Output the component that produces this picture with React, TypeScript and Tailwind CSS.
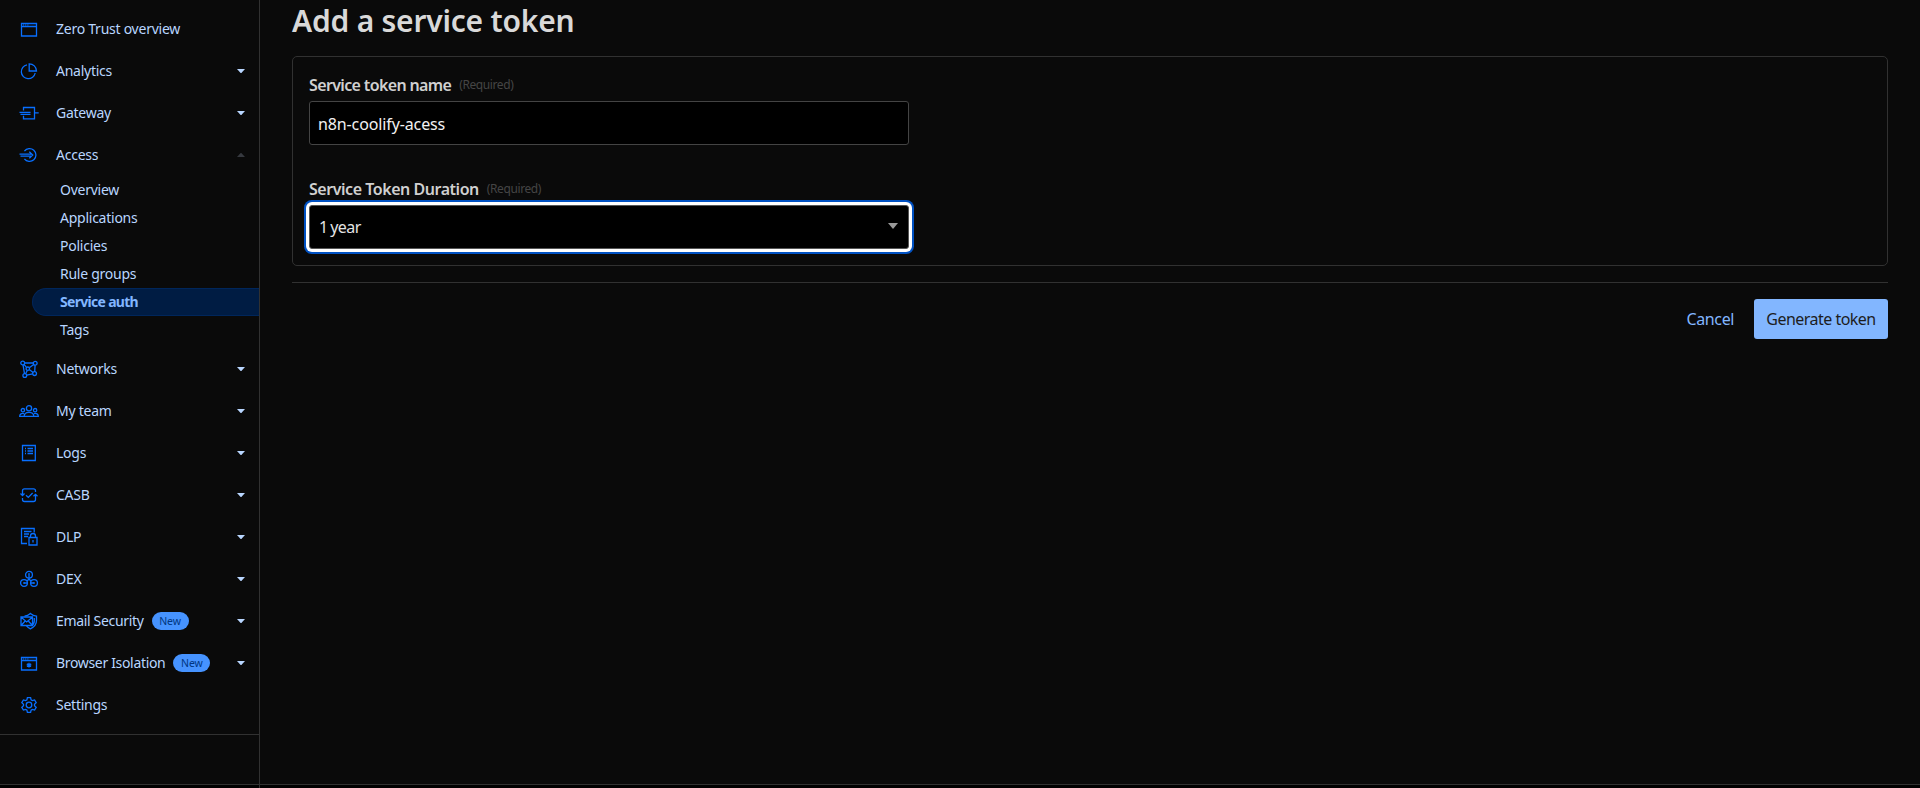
import type { ReactNode } from "react";
import clsx from "clsx";

type NavItem = {
  label: string;
  icon: ReactNode;
  badge?: string;
  caret?: boolean;
  open?: boolean;
  children?: string[];
};

const navItems: NavItem[] = [
  {
    label: "Zero Trust overview",
    icon: (
      <>
        <path d="M2.5 4.5h15v12.5h-15zM2.5 7.5h15" />
        <path d="M4.3 6h.8M6.4 6h.8M8.5 6h.8" />
      </>
    )
  },
  {
    label: "Analytics",
    caret: true,
    icon: (
      <>
        <path d="M8 3.8A7 7 0 1 0 16.2 12" />
        <path d="M10.2 2.8v7.2h7.3A7.3 7.3 0 0 0 10.2 2.8z" />
      </>
    )
  },
  {
    label: "Gateway",
    caret: true,
    icon: (
      <>
        <path d="M4.5 7.5v-3h11v11.3h-11v-3" />
        <path d="M.5 9.4h11M1.5 11.3h10M15.5 9.8h4.2" />
      </>
    )
  },
  {
    label: "Access",
    caret: true,
    open: true,
    icon: (
      <>
        <path d="M5.4 6.2a6.4 6.4 0 1 1 0 7.6" />
        <path d="M.5 9.2h12.5M1.5 11.1h11.8M10.3 6.8l3.4 3.3-3.4 3.2" />
      </>
    ),
    children: ["Overview", "Applications", "Policies", "Rule groups", "Service auth", "Tags"]
  },
  {
    label: "Networks",
    caret: true,
    icon: (
      <>
        <circle cx="3.7" cy="4" r="1.9" />
        <circle cx="16.2" cy="4.3" r="1.9" />
        <circle cx="5.8" cy="16.5" r="1.9" />
        <circle cx="15.6" cy="14.6" r="1.9" />
        <circle cx="8.8" cy="9.7" r="1.7" />
        <path d="M5.6 4h8.7M4 5.9l1.5 8.7M16.1 6.2l-.4 6.5M7.7 16.1l6-1.2M5 5.4l2.5 3M14.7 5.5l-4.4 3.2M8.3 11.4l-1.7 3.4M10.3 10.6l3.8 2.9" />
      </>
    )
  },
  {
    label: "My team",
    caret: true,
    icon: (
      <>
        <circle cx="10" cy="7.2" r="2.6" />
        <circle cx="3.9" cy="9.2" r="1.7" />
        <circle cx="16.1" cy="9.2" r="1.7" />
        <path d="M5.2 15.3c0-3 2-4 4.8-4s4.8 1 4.8 4zM5 12.7c-2.5-.7-4.3.3-4.3 2.6h4.5M15 12.7c2.5-.7 4.3.3 4.3 2.6h-4.5" />
      </>
    )
  },
  {
    label: "Logs",
    caret: true,
    icon: (
      <>
        <path d="M3.5 2.5h12.8v15H3.5z" />
        <path d="M6 5.5h1M8.5 5.5h5.5M6 8h1M8.5 8h5.5M6 10.5h1M8.5 10.5h5.5" />
      </>
    )
  },
  {
    label: "CASB",
    caret: true,
    icon: (
      <>
        <path d="M3.5 6.5v-.7c0-1.2.7-2 2-2h9c1.3 0 2 .8 2 2V7M16.5 10v4.5c0 1.2-.7 2-2 2h-9c-1.3 0-2-.8-2-2V13M3.5 6v4" />
        <path d="M1.5 8.5l2 2 2-2M14.5 11.3l2-2 2 2M7 10.2l2.3 2.2L13.6 8" />
      </>
    )
  },
  {
    label: "DLP",
    caret: true,
    icon: (
      <>
        <path d="M8 16.5H2.5v-15h12.7v4M5 4.5h7.5M5 7h5M5 9.5h4" />
        <path d="M10 10.5h8V18h-8zM11.5 10.5V9a2.5 2.5 0 0 1 5 0v1.5M14 13v2.5" />
      </>
    )
  },
  {
    label: "DEX",
    caret: true,
    icon: (
      <>
        <circle cx="10" cy="5.8" r="3.4" />
        <circle cx="5" cy="14" r="3.4" />
        <circle cx="15" cy="14" r="3.4" />
        <path d="M10 4.8v5.2l-1.9 2M10 10l1.9 2M8.2 14H5M11.8 14H15M5 13v2M15 13v2M9.2 4.8h1.6" />
      </>
    )
  },
  {
    label: "Email Security",
    badge: "New",
    caret: true,
    icon: (
      <>
        <path d="M5.5 5.2c2.2-.3 4.2-1.3 5.9-2.8 1.8 1.6 3.9 2.6 6.1 2.8v4.3c0 3.8-2.2 6.4-6.1 8.3-1.6-.8-2.9-1.8-3.9-3" />
        <path d="M2 6h11.5v8.5H2zM2.2 6.3l5.5 4.6 5.6-4.6M2.2 14.2l3.8-4M13.3 14.2l-3.8-4M15.3 7v3c0 2-1.2 4-3 5" />
      </>
    )
  },
  {
    label: "Browser Isolation",
    badge: "New",
    caret: true,
    icon: (
      <>
        <path d="M2.5 4.5h15v12.5h-15zM2.5 7.5h15" />
        <path d="M4.3 6h.8M6.4 6h.8M8.5 6h.8" />
        <path d="M10 9.8v4.6M7.8 10.9l4.4 2.5M12.2 10.9l-4.4 2.5" strokeWidth="1.4" />
      </>
    )
  },
  {
    label: "Settings",
    icon: (
      <>
        <circle cx="10" cy="10" r="2.8" />
        <path d="M8.4 2.6h3.2l.5 2.3 1.2.7 2.3-.7 1.6 2.7-1.7 1.6v1.6l1.7 1.6-1.6 2.7-2.3-.7-1.2.7-.5 2.3H8.4l-.5-2.3-1.2-.7-2.3.7-1.6-2.7 1.7-1.6V9.2L2.8 7.6l1.6-2.7 2.3.7 1.2-.7z" />
      </>
    )
  }
];

function NavRow({ item }: { item: NavItem }) {
  return (
    <a className="flex h-[42px] items-center pr-[14px] pl-[19px] text-sm tracking-[-0.25px] text-[#b9d6ff]">
      <svg viewBox="0 0 20 20" className="mr-[17px] size-5 shrink-0 fill-none stroke-[#086fff]" strokeWidth="1.3">
        {item.icon}
      </svg>
      <span className={clsx(item.badge && "tracking-[-0.33px]")}>{item.label}</span>
      {item.badge && (
        <span className="ml-2 flex h-[18px] w-[37px] items-center justify-center rounded-full bg-[#4693ff] text-[10.5px] tracking-[-0.1px] text-[#003681]">
          {item.badge}
        </span>
      )}
      {item.caret && (
        <svg
          viewBox="0 0 8 4"
          className={clsx("ml-auto h-1 w-2", item.open ? "rotate-180 fill-[#36393f]" : "fill-[#b9d6ff]")}
        >
          <path d="M0 0h8L4.6 3.7a.9.9 0 0 1-1.2 0z" />
        </svg>
      )}
    </a>
  );
}

function Sidebar() {
  return (
    <aside className="flex w-[260px] shrink-0 flex-col border-r border-[#313131]">
      <nav className="border-b border-[#313131] pt-2 pb-2">
        {navItems.map((item) => (
          <div key={item.label}>
            <NavRow item={item} />
            {item.children && (
              <ul className="mb-1 pl-8 text-sm">
                {item.children.map((child) => (
                  <li
                    key={child}
                    className={clsx(
                      "flex h-7 items-center rounded-l-full border border-r-0 pl-[27px]",
                      child === "Service auth"
                        ? "border-[#00265b] bg-[#001c43] font-bold tracking-[-0.7px] text-[#82b6ff]"
                        : "border-transparent tracking-[-0.25px] text-[#b9d6ff]"
                    )}
                  >
                    {child}
                  </li>
                ))}
              </ul>
            )}
          </div>
        ))}
      </nav>
    </aside>
  );
}

function FieldLabel({ text, className }: { text: string; className: string }) {
  return (
    <div className="flex items-center text-base leading-6 font-semibold text-[#d0d0d0]">
      <span className={className}>{text}</span>
      <span className="ml-2 text-xs font-normal tracking-[-0.4px] text-[#454545]">(Required)</span>
    </div>
  );
}

export default function App() {
  return (
    <div className="flex h-[788px] flex-col overflow-hidden bg-black font-['Noto_Sans',sans-serif]">
      <div className="flex h-[784px] bg-[#0a0a0a]">
        <Sidebar />
        <main className="flex-1 pr-8 pl-8">
          <h1 className="h-14 text-[30px] leading-[42px] font-semibold tracking-[-0.22px] text-[#d9d9d9]">
            Add a service token
          </h1>
          <section className="h-[210px] rounded-[5px] border border-[#313131] px-4 pt-4">
            <FieldLabel text="Service token name" className="tracking-[-0.64px]" />
            <div className="mt-1 flex h-11 w-[600px] items-center rounded-[3px] border border-[#444] bg-black px-2 pt-0.5 text-base tracking-[-0.12px] text-[#f2f2f2]">
              n8n-coolify-acess
            </div>
            <div className="mt-8">
              <FieldLabel text="Service Token Duration" className="tracking-[-0.46px]" />
            </div>
            <div className="mt-1 flex h-11 w-[600px] items-center justify-between rounded-[3px] border border-[#555] bg-black pr-[10px] pl-[9px] text-base tracking-[-0.6px] text-[#e4e4e4] shadow-[0_0_0_3px_#fff,0_0_0_5px_#0051c3]">
              <span className="[word-spacing:-0.8px]">1 year</span>
              <svg viewBox="0 0 10 6" className="mb-0.5 h-1.5 w-2.5 fill-[#999]">
                <path d="M0 0h10L5 6z" />
              </svg>
            </div>
          </section>
          <hr className="mt-4 border-[#313131]" />
          <div className="mt-4 flex items-center justify-end gap-5 text-base">
            <a className="tracking-[-0.4px] text-[#82b6ff]">Cancel</a>
            <button className="h-10 w-[134px] rounded-[3px] bg-[#82b6ff] tracking-[-0.52px] whitespace-nowrap text-[#1d1d1d]">
              Generate token
            </button>
          </div>
        </main>
      </div>
      <footer className="flex h-1 border-t border-[#313131]">
        <div className="w-[260px] border-r border-[#313131]" />
      </footer>
    </div>
  );
}
